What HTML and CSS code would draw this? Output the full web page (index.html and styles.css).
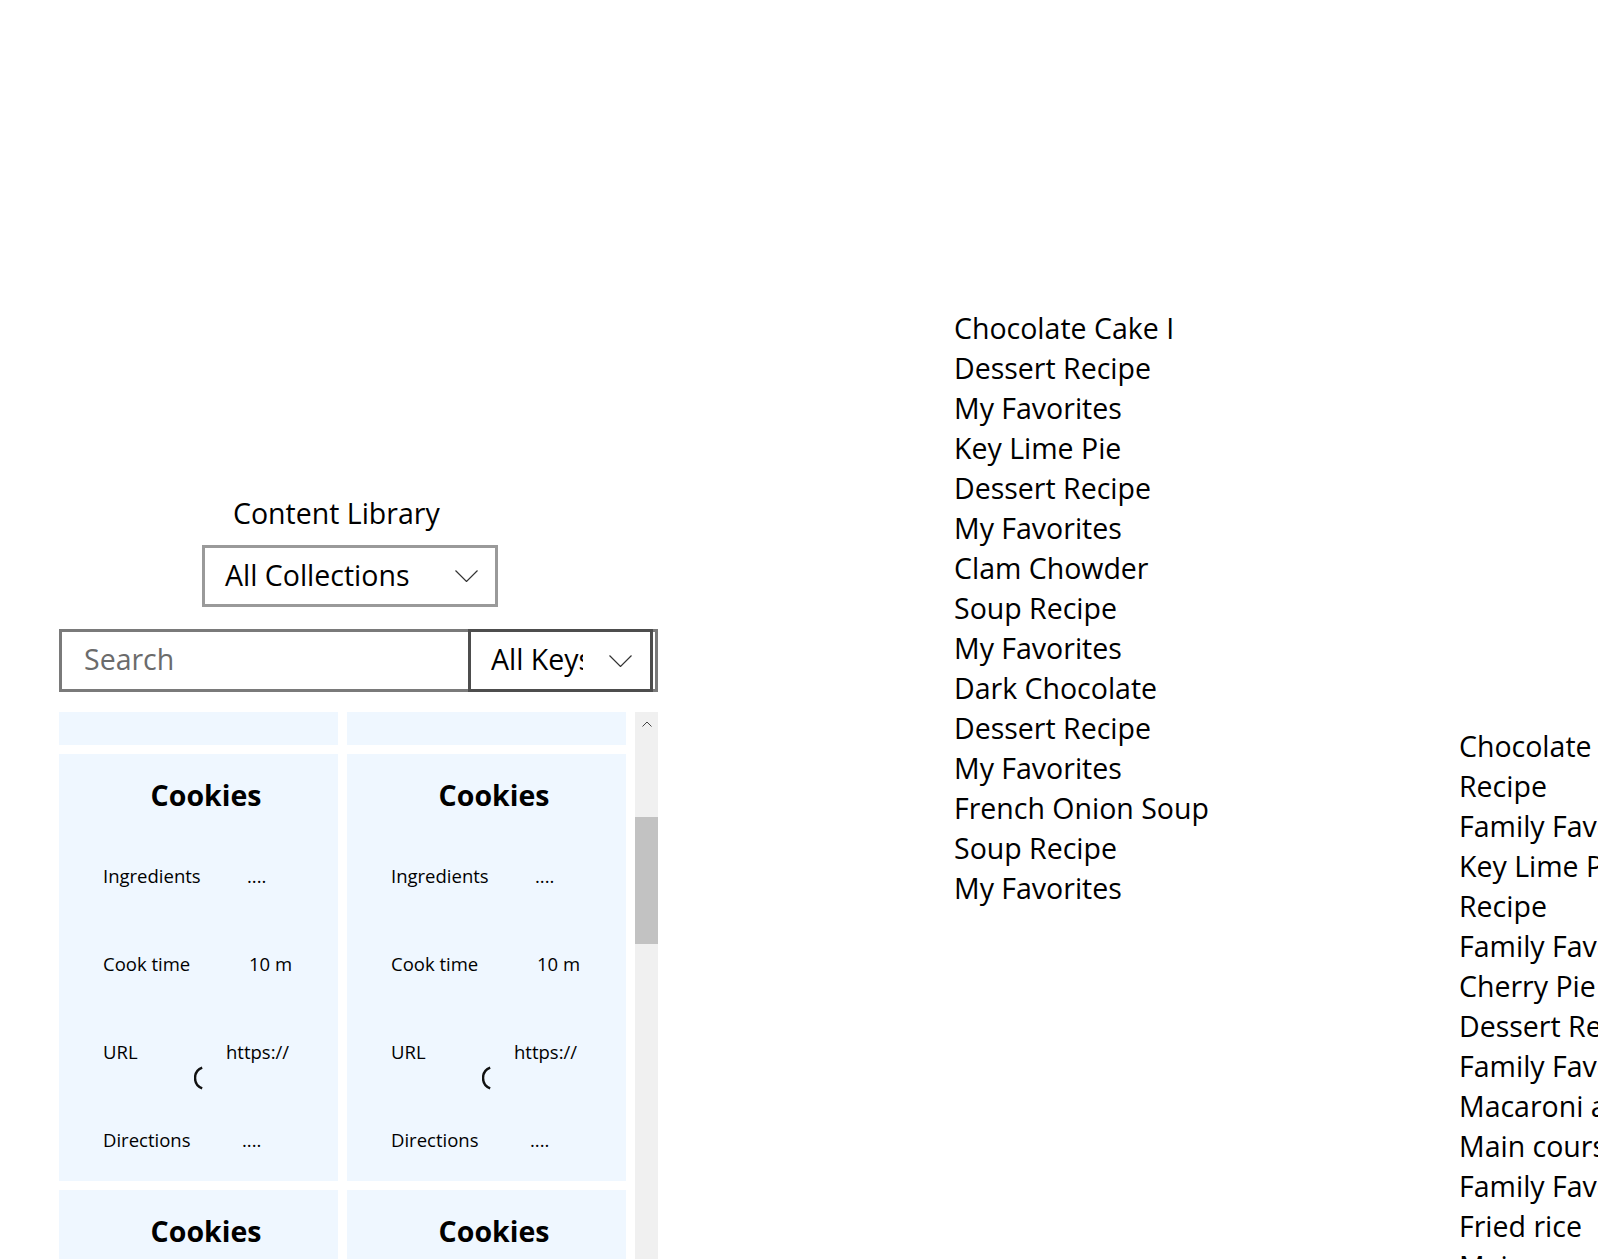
FILE: index.html
```html
<!DOCTYPE html>
<html lang="en">
<head>
<meta charset="utf-8">
<title>Content Library</title>
<link rel="stylesheet" href="styles.css">
</head>
<body>
<div class="page">
  <section class="library">
    <div class="lib-title">Content Library</div>
    <div class="collections">
      <span class="combo-text">All Collections</span>
      <svg class="chev" width="23" height="12" viewBox="0 0 23 12"><polyline points="0.5,0.5 11.5,11.5 22.5,0.5" fill="none" stroke="#333" stroke-width="1.2"/></svg>
    </div>
    <div class="searchbar">
      <span class="search-ph">Search</span>
      <div class="keys">
        <span class="keys-text">All Keys</span>
        <svg class="chev" width="23" height="12" viewBox="0 0 23 12"><polyline points="0.5,0.5 11.5,11.5 22.5,0.5" fill="none" stroke="#333" stroke-width="1.2"/></svg>
      </div>
    </div>
    <div class="scroller">
      <div class="cards">
        <div class="card card-partial"></div>
        <div class="card card-partial"></div>

        <div class="card">
          <div class="card-title">Cookies</div>
          <div class="row"><span class="lbl">Ingredients</span><span class="val v-ing">....</span></div>
          <div class="row"><span class="lbl">Cook time</span><span class="val v-cook">10 m</span></div>
          <div class="row row-url">
            <div class="row-line"><span class="lbl">URL</span><span class="val v-url">https://</span></div>
            <svg class="ring" width="24" height="24" viewBox="0 0 24 24"><path d="M8.2 1.7 A11 11 0 0 0 8.2 22.3" fill="none" stroke="#111" stroke-width="2.4"/></svg>
          </div>
          <div class="row"><span class="lbl">Directions</span><span class="val v-dir">....</span></div>
        </div>
        <div class="card">
          <div class="card-title">Cookies</div>
          <div class="row"><span class="lbl">Ingredients</span><span class="val v-ing">....</span></div>
          <div class="row"><span class="lbl">Cook time</span><span class="val v-cook">10 m</span></div>
          <div class="row row-url">
            <div class="row-line"><span class="lbl">URL</span><span class="val v-url">https://</span></div>
            <svg class="ring" width="24" height="24" viewBox="0 0 24 24"><path d="M8.2 1.7 A11 11 0 0 0 8.2 22.3" fill="none" stroke="#111" stroke-width="2.4"/></svg>
          </div>
          <div class="row"><span class="lbl">Directions</span><span class="val v-dir">....</span></div>
        </div>

        <div class="card">
          <div class="card-title">Cookies</div>
        </div>
        <div class="card">
          <div class="card-title">Cookies</div>
        </div>
      </div>
      <div class="vscroll">
        <svg class="up" width="10" height="6" viewBox="0 0 10 6"><polyline points="0.5,5.5 5,1 9.5,5.5" fill="none" stroke="#444" stroke-width="1"/></svg>
        <div class="thumb"></div>
      </div>
    </div>
  </section>

  <ul class="list list-mid">
    <li>Chocolate Cake I</li>
    <li>Dessert Recipe</li>
    <li>My Favorites</li>
    <li>Key Lime Pie</li>
    <li>Dessert Recipe</li>
    <li>My Favorites</li>
    <li>Clam Chowder</li>
    <li>Soup Recipe</li>
    <li>My Favorites</li>
    <li>Dark Chocolate</li>
    <li>Dessert Recipe</li>
    <li>My Favorites</li>
    <li>French Onion Soup</li>
    <li>Soup Recipe</li>
    <li>My Favorites</li>
  </ul>

  <ul class="list list-right">
    <li>Chocolate Cake</li>
    <li>Recipe</li>
    <li>Family Favorites</li>
    <li>Key Lime Pie</li>
    <li>Recipe</li>
    <li>Family Favorites</li>
    <li>Cherry Pie</li>
    <li>Dessert Recipe</li>
    <li>Family Favorites</li>
    <li>Macaroni and Cheese</li>
    <li>Main course</li>
    <li>Family Favorites</li>
    <li>Fried rice</li>
    <li>Main course</li>
  </ul>
</div>
</body>
</html>
```
FILE: styles.css
```css
html, body {
  margin: 0;
  padding: 0;
  overflow: hidden;
  background: #fff;
}
body {
  font-family: "Open Sans", "Noto Sans", "Liberation Sans", sans-serif;
  color: #000;
  width: 1598px;
  height: 1259px;
}
.page {
  display: flex;
  align-items: flex-start;
  width: 1598px;
  height: 1259px;
  overflow: hidden;
}

/* left panel */
.library {
  flex: none;
  width: 599px;
  margin-left: 59px;
  padding-top: 493px;
}
.lib-title {
  margin-left: 174px;
  font-size: 28.5px;
  line-height: 40px;
}
.collections {
  margin-top: 12px;
  margin-left: 143px;
  width: 296px;
  height: 62px;
  box-sizing: border-box;
  border: 3px solid #9a9a9a;
  display: flex;
  align-items: center;
  justify-content: space-between;
  padding: 0 17px 0 20px;
}
.combo-text {
  font-size: 28.5px;
  line-height: 40px;
  margin-top: -2px;
}
.chev { display: block; flex: none; }

.searchbar {
  margin-top: 22px;
  width: 599px;
  height: 63px;
  box-sizing: border-box;
  border: 3px solid #7a7a7a;
  display: flex;
  align-items: center;
}
.search-ph {
  flex: 1;
  padding-left: 22px;
  font-size: 28.5px;
  line-height: 40px;
  margin-top: -3px;
  color: #6b6b6b;
}
.keys {
  flex: none;
  width: 185px;
  height: 63px;
  margin: -3px 2px -3px 0;
  box-sizing: border-box;
  border: 3px solid #4d4d4d;
  display: flex;
  align-items: center;
  padding: 0 18px 0 20px;
}
.keys-text {
  width: 92px;
  overflow: hidden;
  white-space: nowrap;
  font-size: 28.5px;
  line-height: 40px;
  margin-top: -3px;
  margin-right: 26px;
}

/* scroll area */
.scroller {
  margin-top: 20px;
  height: 547px;
  overflow: hidden;
  display: flex;
  gap: 9px;
}
.cards {
  display: grid;
  grid-template-columns: 279px 279px;
  grid-template-rows: 33px 427px 427px;
  gap: 9px;
}
.card {
  background: #eff7ff;
  padding-left: 44px;
  padding-top: 21px;
  box-sizing: border-box;
}
.card-partial { padding: 0; }
.card-title {
  margin-left: -29px;
  text-align: center;
  font-weight: 700;
  font-size: 28.5px;
  line-height: 40px;
  height: 40px;
  margin-bottom: 49px;
}
.row {
  display: flex;
  height: 88px;
  font-size: 18.5px;
  line-height: 24px;
}
.row-url { display: block; }
.row-line { display: flex; }
.lbl {
  flex: none;
  width: 0;
  white-space: nowrap;
}
.val { flex: none; }
.v-ing { margin-left: 144px; }
.v-cook { margin-left: 146px; }
.v-url { margin-left: 123px; }
.v-dir { margin-left: 139px; }
.ring {
  display: block;
  margin-left: 91px;
  margin-top: 2px;
}

.vscroll {
  flex: none;
  width: 23px;
  height: 547px;
  background: #f0f0f0;
  display: flex;
  flex-direction: column;
  align-items: center;
}
.up {
  display: block;
  margin-top: 9px;
}
.thumb {
  align-self: stretch;
  margin-top: 90px;
  height: 127px;
  background: #c2c2c2;
}

/* lists */
.list {
  list-style: none;
  margin: 0;
  padding: 0;
  font-size: 28.5px;
  line-height: 40px;
  white-space: nowrap;
}
.list-mid {
  flex: none;
  width: 505px;
  margin-left: 296px;
  padding-top: 308px;
}
.list-right {
  flex: none;
  padding-top: 726px;
}
```
